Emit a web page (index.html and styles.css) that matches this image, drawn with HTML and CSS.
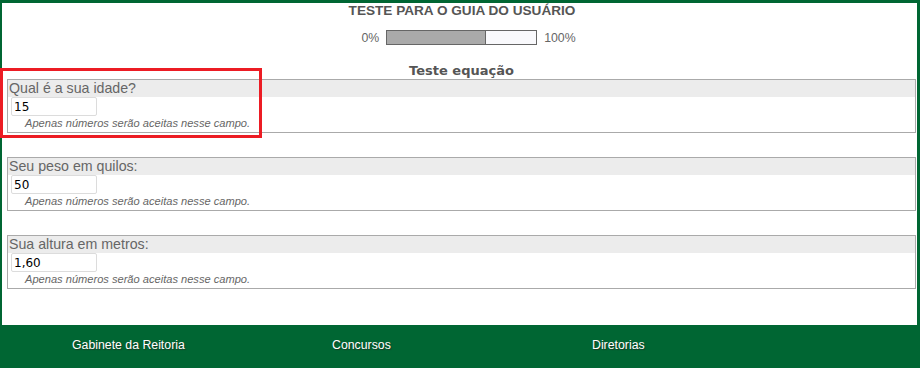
FILE: index.html
```html
<!DOCTYPE html>
<html lang="pt-BR">
<head>
<meta charset="utf-8">
<title>Teste para o guia do usuário</title>
<link rel="stylesheet" href="styles.css">
</head>
<body>
<div class="page">
  <main class="content">
    <h1 class="title">TESTE PARA O GUIA DO USUÁRIO</h1>
    <div class="progress">
      <span class="pct">0%</span>
      <div class="bar"><div class="fill" style="width:66.4%"></div></div>
      <span class="pct">100%</span>
    </div>
    <h2 class="section">Teste equação</h2>
    <div class="questions">
      <div class="question highlighted">
        <div class="qlabel">Qual é a sua idade?</div>
        <div class="qbody">
          <input class="qinput" type="text" value="15">
          <div class="hint">Apenas números serão aceitas nesse campo.</div>
        </div>
        <div class="mark"></div>
      </div>
      <div class="question">
        <div class="qlabel">Seu peso em quilos:</div>
        <div class="qbody">
          <input class="qinput" type="text" value="50">
          <div class="hint">Apenas números serão aceitas nesse campo.</div>
        </div>
      </div>
      <div class="question">
        <div class="qlabel">Sua altura em metros:</div>
        <div class="qbody">
          <input class="qinput" type="text" value="1,60">
          <div class="hint">Apenas números serão aceitas nesse campo.</div>
        </div>
      </div>
    </div>
  </main>
  <footer class="footer">
    <a class="flink" href="#">Gabinete da Reitoria</a>
    <a class="flink" href="#">Concursos</a>
    <a class="flink" href="#">Diretorias</a>
  </footer>
</div>
</body>
</html>
```
FILE: styles.css
```css
html, body {
  margin: 0;
  padding: 0;
  background: #006633;
}
body {
  font-family: "Liberation Sans", Arial, sans-serif;
  width: 920px;
  height: 368px;
  overflow: hidden;
}
.page {
  display: flex;
  flex-direction: column;
  height: 368px;
}
.content {
  background: #ffffff;
  margin: 3px 3px 0 2px;
  height: 322px;
  display: flex;
  flex-direction: column;
}
.title {
  margin: 0;
  font-size: 13.6px;
  line-height: 16px;
  font-weight: bold;
  color: #555555;
  text-align: center;
  padding-left: 5px;
}
.progress {
  margin-top: 11px;
  display: flex;
  align-items: center;
  justify-content: center;
  gap: 6px;
  height: 15px;
  padding-left: 18px;
}
.pct {
  font-size: 12.3px;
  color: #666666;
}
.bar {
  width: 149px;
  height: 13px;
  border: 1px solid #666666;
  background: #f9f9fc;
  margin: 0 1px;
}
.fill {
  height: 100%;
  background: #aaaaaa;
  border-right: 1px solid #666666;
  box-sizing: border-box;
}
.section {
  margin: 18px 0 0 0;
  font-family: "DejaVu Sans", Verdana, sans-serif;
  font-size: 13px;
  line-height: 16px;
  font-weight: bold;
  color: #555555;
  text-align: center;
  padding-left: 4px;
}
.questions {
  display: flex;
  flex-direction: column;
  gap: 24px;
  margin: 0 1px 0 5px;
}
.question {
  position: relative;
  border: 1px solid #aaaaaa;
  height: 52px;
}
.qlabel {
  background: #ececec;
  height: 17px;
  font-size: 14.2px;
  line-height: 17px;
  color: #666666;
  padding-left: 1px;
  white-space: nowrap;
}
.qbody {
  padding-left: 3px;
}
.qinput {
  display: block;
  box-sizing: border-box;
  width: 86px;
  height: 19px;
  margin: 0;
  padding: 0 0 0 2px;
  border: 1px solid #dcdcdc;
  border-radius: 2px;
  font-family: "DejaVu Sans", Verdana, sans-serif;
  font-size: 12px;
  color: #000000;
  background: #ffffff;
  outline: none;
}
.hint {
  font-size: 11.1px;
  font-style: italic;
  line-height: 15px;
  color: #666666;
  padding-left: 14px;
}
.mark {
  position: absolute;
  left: -8px;
  top: -12px;
  width: 256px;
  height: 64px;
  border: 3px solid #ec1c24;
  pointer-events: none;
}
.footer {
  flex: 1;
  display: flex;
  align-items: center;
  padding: 0 0 4px 72px;
  background: #006633;
}
.flink {
  width: 260px;
  font-size: 12.3px;
  color: #ffffff;
  text-decoration: none;
  text-shadow: 1px 1px 1px #1b3a26;
}
```
